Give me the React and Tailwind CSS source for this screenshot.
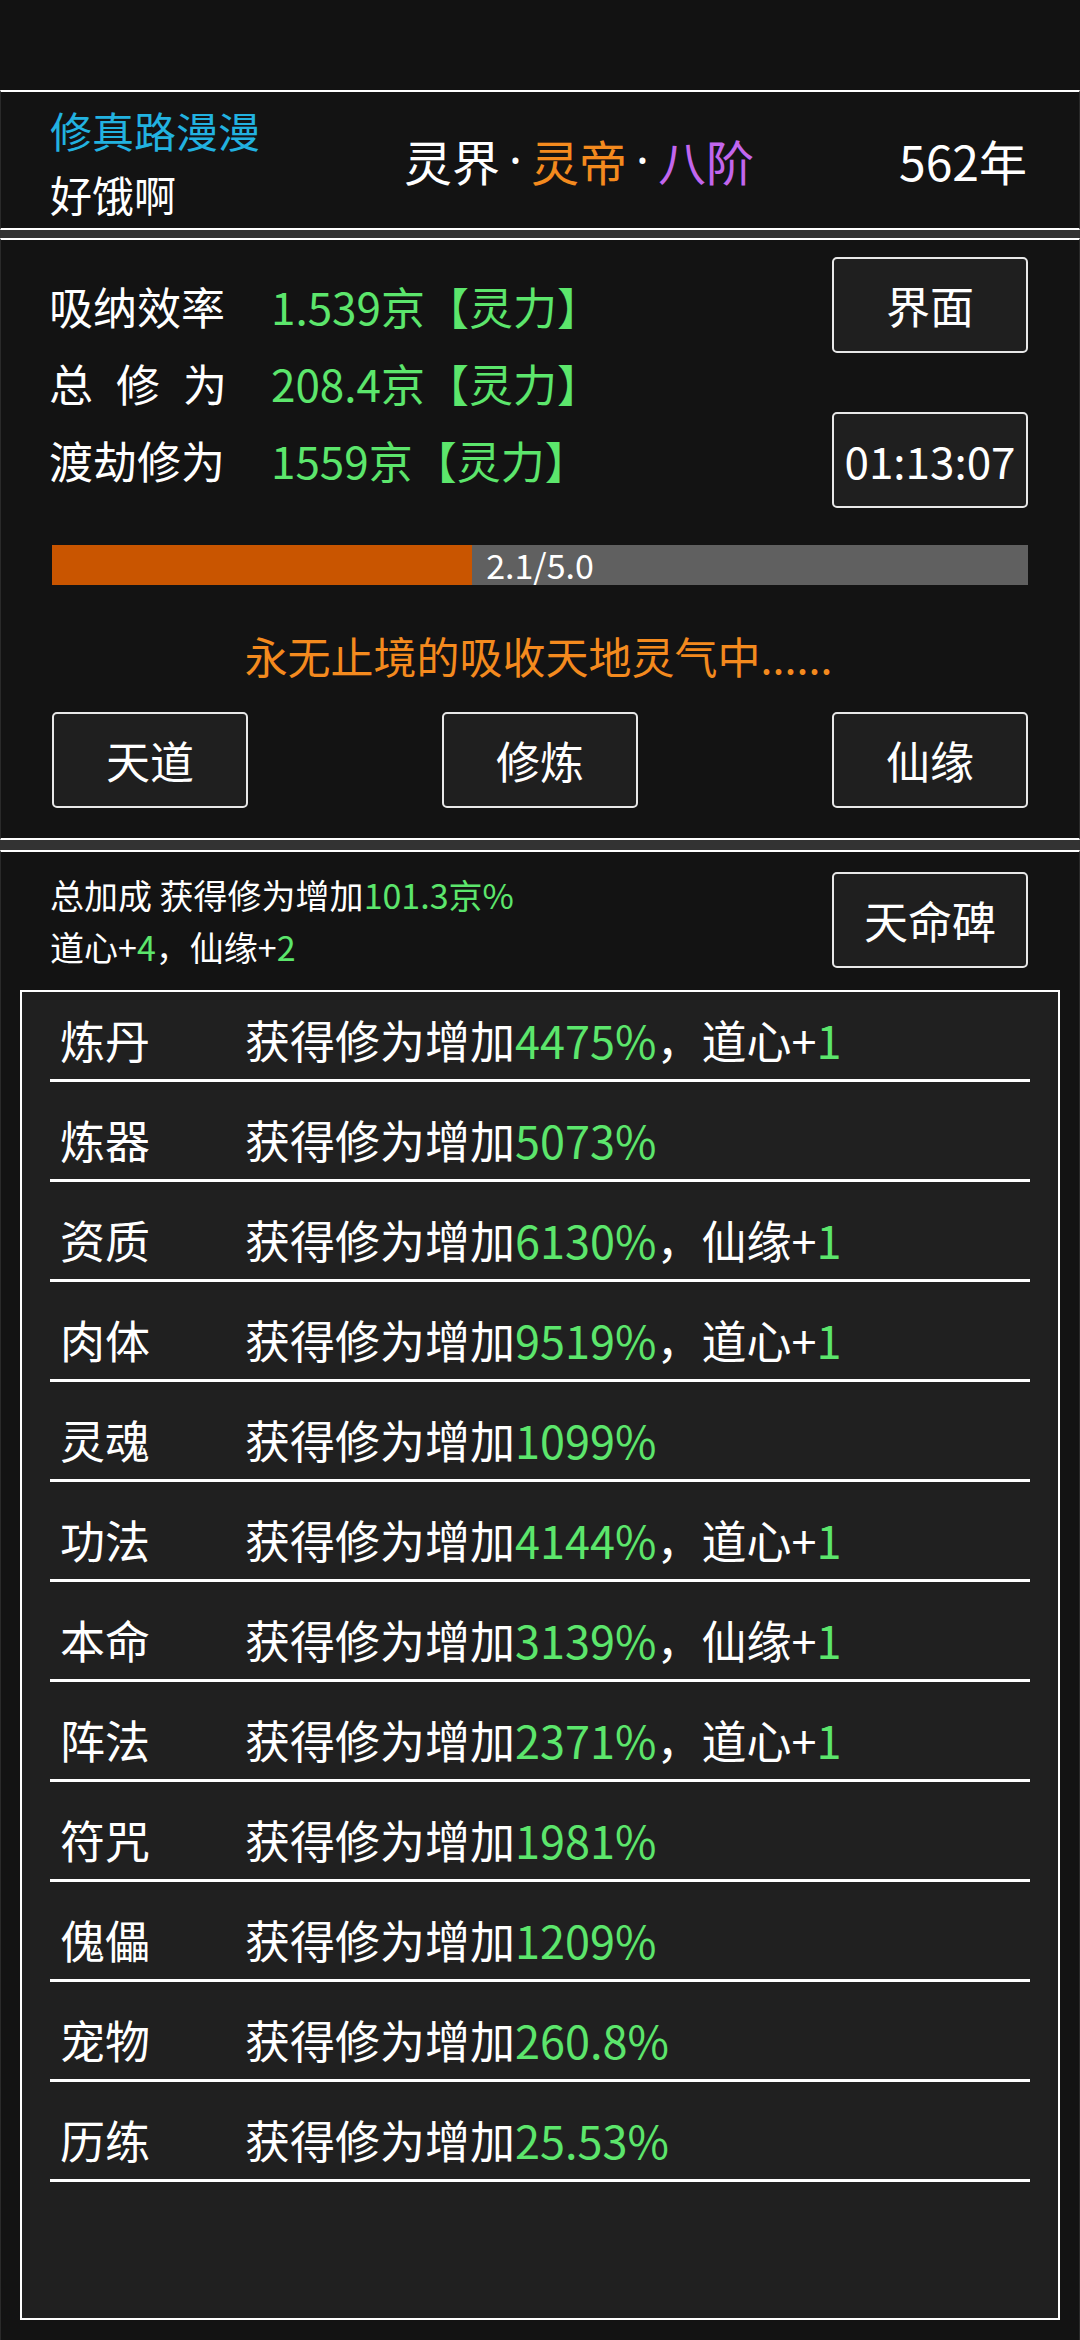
import React from "react";

const font = { fontFamily: '"Noto Sans CJK SC", "Noto Sans", sans-serif' };
const latin = { fontFamily: '"Noto Sans", sans-serif' };

const Btn = ({ children, className = "" }) => (
  <div
    className={`w-[196px] h-[96px] flex items-center justify-center rounded-[5px] border-2 border-[#e8e8e8] bg-[#1f1f1f] text-[44px] text-white ${className}`}
  >
    {children}
  </div>
);

const G = ({ children }) => <span className="text-[#5ce66c]">{children}</span>;

const Dot = () => (
  <span className="inline-block w-[31px] text-center text-white" style={latin}>
    ·
  </span>
);

const stats = [
  { label: "吸纳效率", value: "1.539京【灵力】" },
  { label: "总修为", value: "208.4京【灵力】", spread: true },
  { label: "渡劫修为", value: "1559京【灵力】" },
];

// 加成列表
const bonuses = [
  { name: "炼丹", pct: "4475%", extra: ["道心", "1"] },
  { name: "炼器", pct: "5073%" },
  { name: "资质", pct: "6130%", extra: ["仙缘", "1"] },
  { name: "肉体", pct: "9519%", extra: ["道心", "1"] },
  { name: "灵魂", pct: "1099%" },
  { name: "功法", pct: "4144%", extra: ["道心", "1"] },
  { name: "本命", pct: "3139%", extra: ["仙缘", "1"] },
  { name: "阵法", pct: "2371%", extra: ["道心", "1"] },
  { name: "符咒", pct: "1981%" },
  { name: "傀儡", pct: "1209%" },
  { name: "宠物", pct: "260.8%" },
  { name: "历练", pct: "25.53%" },
];

const App = () => {
  return (
    <div className="w-[1080px] h-[2340px] bg-[#333333] flex flex-col text-white overflow-hidden" style={font}>
      {/* top strip */}
      <div className="h-[90px] bg-[#121212]" />

      {/* header */}
      <div className="h-[140px] border-y-2 border-white border-x border-x-[#2a2a2a] bg-[#131313] flex items-center pl-[49px] pr-[52px]">
        <div className="w-[354px] flex flex-col pt-[4px]">
          <div className="text-[42px] leading-[64px] text-[#22b2e0]">修真路漫漫</div>
          <div className="text-[42px] leading-[64px] text-white">好饿啊</div>
        </div>
        <div className="text-[48px] leading-[64px] flex items-center">
          <span className="text-white">灵界</span>
          <Dot />
          <span className="text-[#f48a1e]">灵帝</span>
          <Dot />
          <span className="text-[#c266ee]">八阶</span>
        </div>
        <div className="ml-auto text-[48px] leading-[64px]">562年</div>
      </div>

      <div className="h-[8px]" />

      {/* main stats */}
      <div className="h-[602px] border-y-2 border-white border-x border-x-[#2a2a2a] bg-[#131313] pl-[48px] pr-[51px] pt-[17px] flex flex-col">
        <div className="flex items-start justify-between">
          <div className="pt-[10px] flex flex-col">
            {stats.map((s) => (
              <div key={s.label} className="h-[77px] flex items-center text-[44px]">
                {s.spread ? (
                  <span className="w-[178px] flex justify-between">
                    {s.label.split("").map((c) => (
                      <span key={c}>{c}</span>
                    ))}
                  </span>
                ) : (
                  <span className="w-[178px]">{s.label}</span>
                )}
                <span className="ml-[44px] text-[#5ce66c]">{s.value}</span>
              </div>
            ))}
          </div>
          <div className="flex flex-col gap-[59px]">
            <Btn>界面</Btn>
            <Btn>01:13:07</Btn>
          </div>
        </div>

        <div className="relative mt-[37px] ml-[3px] h-[40px] bg-[#606060]">
          <div className="absolute left-0 top-0 h-full bg-[#c95500]" style={{ width: "43%" }} />
          <div className="absolute inset-0 flex items-center justify-center text-[34px] leading-[40px] text-white">
            2.1/5.0
          </div>
        </div>

        <div className="mt-[40px] text-center text-[43px] leading-[60px] text-[#f48a1e]">
          永无止境的吸收天地灵气中......
        </div>

        <div className="mt-[27px] ml-[3px] flex justify-between">
          <Btn>天道</Btn>
          <Btn>修炼</Btn>
          <Btn>仙缘</Btn>
        </div>
      </div>

      <div className="h-[10px]" />

      {/* bonus panel */}
      <div className="flex-1 border-t-2 border-white border-x border-x-[#2a2a2a] bg-[#131313] flex flex-col">
        <div className="flex items-start justify-between pl-[49px] pr-[51px] pt-[17px]">
          <div className="text-[34px] leading-[52px]">
            <div>
              总加成 获得修为增加<G>101.3京%</G>
            </div>
            <div>
              道心+<G>4</G>，仙缘+<G>2</G>
            </div>
          </div>
          <Btn className="mt-[3px]">天命碑</Btn>
        </div>

        <div className="mt-[17px] mx-[19px] h-[1330px] border-2 border-white bg-[#202020] px-[28px]">
          {bonuses.map((b) => (
            <div
              key={b.name}
              className="h-[100px] first:h-[90px] border-b-[3px] border-white flex items-end pb-[19px] pl-[10px] text-[45px] leading-[40px]"
            >
              <span className="w-[185px]">{b.name}</span>
              <span>
                获得修为增加<G>{b.pct}</G>
                {b.extra && (
                  <>
                    ，{b.extra[0]}+<G>{b.extra[1]}</G>
                  </>
                )}
              </span>
            </div>
          ))}
        </div>
      </div>
    </div>
  );
};

export default App;
